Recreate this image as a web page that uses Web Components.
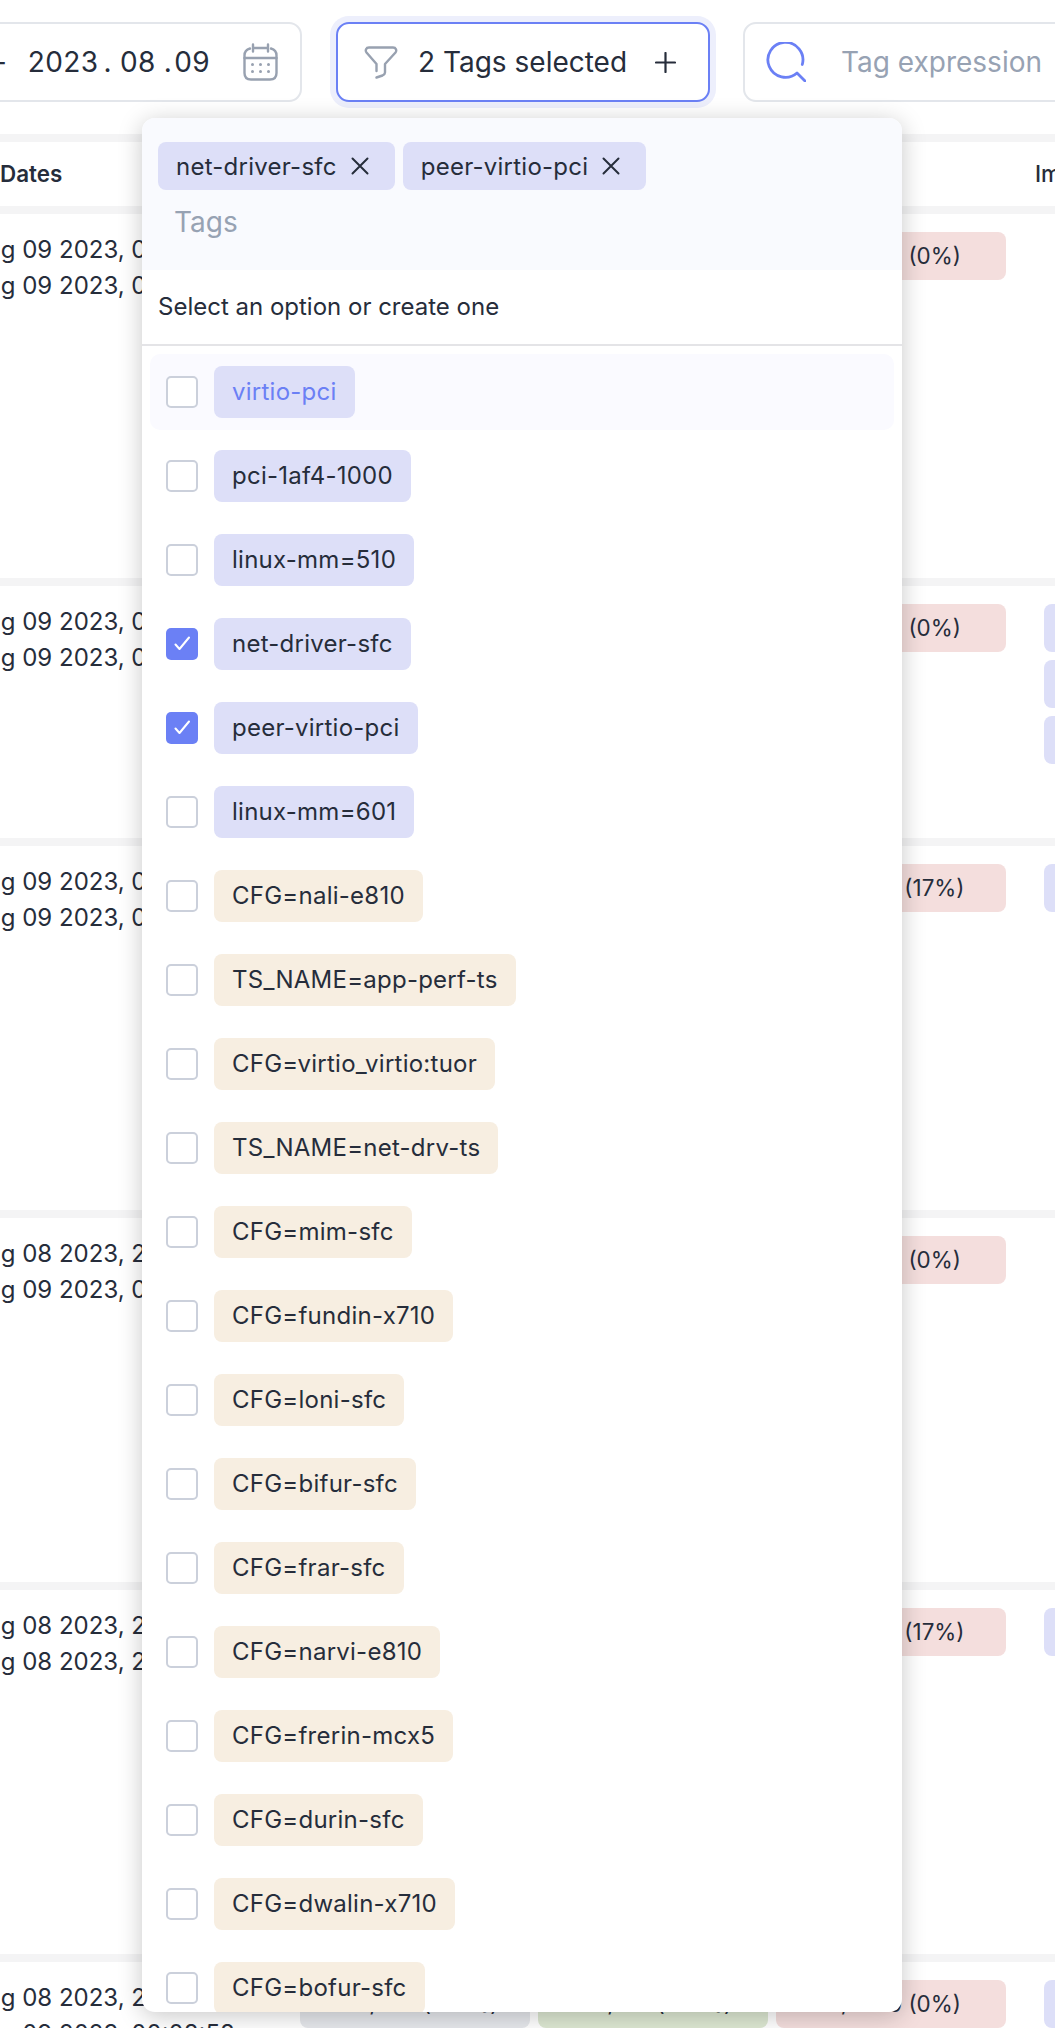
<!DOCTYPE html>
<html lang="en"><head><meta charset="utf-8"><title>Tags</title>
<style>
html,body{margin:0;padding:0;height:2028px;overflow:hidden;background:#fff}
body{font-family:Inter,"Noto Sans",sans-serif;color:#262d3b}
</style></head><body>
<app-page>
  <tool-bar slot="bar"></tool-bar>
  <data-table slot="table">
    <table-head></table-head>
    <table-row h="364" a="Aug 09 2023, 00:12:44" b="Aug 09 2023, 02:51:07">
      <ui-pill tone="gray">1180 / 1180 (100%)</ui-pill><ui-pill tone="green">0 / 1180 (0%)</ui-pill><ui-pill tone="red">0 / 1180 (0%)</ui-pill><tag-stack></tag-stack>
    </table-row>
    <table-row h="252" a="Aug 09 2023, 00:03:18" b="Aug 09 2023, 03:27:39">
      <ui-pill tone="gray">1180 / 1180 (100%)</ui-pill><ui-pill tone="green">0 / 1180 (0%)</ui-pill><ui-pill tone="red">0 / 1180 (0%)</ui-pill>
      <tag-stack><ui-pill tone="purple" left>virtio-pci</ui-pill><ui-pill tone="purple" left>net-driver-sfc</ui-pill><ui-pill tone="purple" left>linux-mm=510</ui-pill></tag-stack>
    </table-row>
    <table-row h="364" a="Aug 09 2023, 00:01:55" b="Aug 09 2023, 01:40:12">
      <ui-pill tone="gray">118 / 118 (100%)</ui-pill><ui-pill tone="green">98 / 118 (83%)</ui-pill><ui-pill tone="red">20 / 118 (17%)</ui-pill>
      <tag-stack><ui-pill tone="purple" left>pci-1af4-1000</ui-pill></tag-stack>
    </table-row>
    <table-row h="364" a="Aug 08 2023, 23:48:21" b="Aug 09 2023, 00:58:36">
      <ui-pill tone="gray">1180 / 1180 (100%)</ui-pill><ui-pill tone="green">0 / 1180 (0%)</ui-pill><ui-pill tone="red">0 / 1180 (0%)</ui-pill><tag-stack></tag-stack>
    </table-row>
    <table-row h="364" a="Aug 08 2023, 21:16:02" b="Aug 08 2023, 23:30:49">
      <ui-pill tone="gray">118 / 118 (100%)</ui-pill><ui-pill tone="green">98 / 118 (83%)</ui-pill><ui-pill tone="red">20 / 118 (17%)</ui-pill>
      <tag-stack><ui-pill tone="purple" left>linux-mm=601</ui-pill></tag-stack>
    </table-row>
    <table-row h="364" a="Aug 08 2023, 20:41:33" b="Aug 09 2023, 00:08:58">
      <ui-pill tone="gray">118 / 118 (100%)</ui-pill><ui-pill tone="green">66 / 66 (100%)</ui-pill><ui-pill tone="red">0 / 1180 (0%)</ui-pill>
      <tag-stack><ui-pill tone="purple" left>peer-virtio-pci</ui-pill></tag-stack>
    </table-row>
  </data-table>
  <tag-dropdown slot="menu">
    <tag-option tone="purple" hover>virtio-pci</tag-option>
    <tag-option tone="purple">pci-1af4-1000</tag-option>
    <tag-option tone="purple">linux-mm=510</tag-option>
    <tag-option tone="purple" checked>net-driver-sfc</tag-option>
    <tag-option tone="purple" checked>peer-virtio-pci</tag-option>
    <tag-option tone="purple">linux-mm=601</tag-option>
    <tag-option tone="beige">CFG=nali-e810</tag-option>
    <tag-option tone="beige">TS_NAME=app-perf-ts</tag-option>
    <tag-option tone="beige">CFG=virtio_virtio:tuor</tag-option>
    <tag-option tone="beige">TS_NAME=net-drv-ts</tag-option>
    <tag-option tone="beige">CFG=mim-sfc</tag-option>
    <tag-option tone="beige">CFG=fundin-x710</tag-option>
    <tag-option tone="beige">CFG=loni-sfc</tag-option>
    <tag-option tone="beige">CFG=bifur-sfc</tag-option>
    <tag-option tone="beige">CFG=frar-sfc</tag-option>
    <tag-option tone="beige">CFG=narvi-e810</tag-option>
    <tag-option tone="beige">CFG=frerin-mcx5</tag-option>
    <tag-option tone="beige">CFG=durin-sfc</tag-option>
    <tag-option tone="beige">CFG=dwalin-x710</tag-option>
    <tag-option tone="beige">CFG=bofur-sfc</tag-option>
  </tag-dropdown>
</app-page>
<script>
const TONES = {purple:'#dddff8',beige:'#f7eee1',red:'#f4dedd',green:'#dde8d2',gray:'#e6e8ec'};
const COLS = '322px 230px 230px 230px 200px';
function def(name, html, observe){
  customElements.define(name, class extends HTMLElement{
    constructor(){super();this.attachShadow({mode:'open'}).innerHTML = typeof html==='function'? html(this):html;}
    connectedCallback(){ if(observe) this.shadowRoot.innerHTML = html(this); }
  });
}
def('app-page', `<style>
:host{display:block;position:relative;width:1055px;height:2028px;overflow:hidden}
.menu{position:absolute;left:142px;top:118px;z-index:5}
</style><slot name="bar"></slot><slot name="table"></slot><div class="menu"><slot name="menu"></slot></div>`);

def('tool-bar', `<style>
:host{display:flex;align-items:stretch;height:80px;padding-top:22px;margin-left:-200px;margin-bottom:32px;font-size:28px;line-height:32px;white-space:nowrap}
.box{box-sizing:border-box;height:80px;border:2px solid #e3e6eb;border-radius:13px;display:flex;align-items:center;flex:none;background:#fff}
.date{width:502px;justify-content:flex-end;padding-right:22px}
.date .d{letter-spacing:.4px;margin-right:33px;display:flex}
.date .dash{margin-right:23px;letter-spacing:0}
.date .sep{margin:0 8px 0 5px}
.date .sep2{margin:0 2px 0 8px}
.filter{width:374px;margin-left:34px;border-color:#6b80f5;box-shadow:0 0 0 6px #edeffc;padding-left:26px}
.filter .t{margin:0 28px 0 20px}
.search{width:400px;margin-left:33px;padding-left:21px;color:#97a2b3}
.search .t{margin-left:35px}
svg{display:block;flex:none;fill:none}
</style>
<div class="box date"><span class="dash">–</span><span class="d"><span>2023</span><span class="sep">.</span><span>08</span><span class="sep2">.</span><span>09</span></span>
<svg width="35" height="38" viewBox="0 0 35 38" stroke="#98a1b0" stroke-width="2.4" stroke-linecap="round"><path d="M7 5.5C3.5 6.5 1.5 8.5 1.5 12.500V30C1.500 34 4 36.500 8 36.500H27C31 36.500 33.500 34 33.500 30V12.500C33.500 8.500 31.500 6.500 28 5.500"/><path d="M10 1.500V8.500M25 1.500V8.500M10 5H25M1.500 15H33.500"/><g fill="#98a1b0" stroke="none"><circle cx="9.500" cy="21.500" r="1.500"/><circle cx="17.500" cy="21.500" r="1.500"/><circle cx="25.500" cy="21.500" r="1.500"/><circle cx="9.500" cy="28.500" r="1.500"/><circle cx="17.500" cy="28.500" r="1.500"/><circle cx="25.500" cy="28.500" r="1.500"/></g></svg></div>
<div class="box filter"><svg width="34" height="33" viewBox="0 0 34 33" stroke="#98a1b0" stroke-width="2.400" stroke-linecap="round" stroke-linejoin="round"><path d="M12.500 25V18L2.500 6.500C1 4.500 2 1.500 5 1.500H29C32 1.500 33 4.500 31.500 6.500L21 18V26.500C21 28 20 28.800 18.500 29.500L12.500 31.500"/></svg><span class="t">2 Tags selected</span><svg width="21" height="21" viewBox="0 0 21 21" stroke="#262d3b" stroke-width="2.200" stroke-linecap="round"><path d="M10.500 1V20M1 10.500H20"/></svg></div>
<div class="box search"><svg width="40" height="40" viewBox="0 0 40 40" stroke="#6b80f5" stroke-width="2.800" stroke-linecap="round" stroke-linejoin="round"><path d="M36.300 22.500A17.500 17.500 0 1 0 31 31L39 39"/></svg><span class="t">Tag expression</span></div>`);

def('data-table', `<style>
:host{display:block;margin-left:-30px;width:1200px;font-size:24px;line-height:36px;white-space:nowrap;background:#fff}
</style><slot></slot>`);

def('table-head', `<style>
:host{display:grid;grid-template-columns:${COLS};column-gap:8px;box-sizing:border-box;height:72px;border-top:8px solid #f4f4f5;font-weight:500;font-size:22.400px;align-items:center;color:#262d3b}
.d{padding-left:30px;font-weight:600}
.i{margin-left:21px}
</style><span class="d">Dates</span><span>Total</span><span>Passed</span><span>Failed</span><span class="i">Images</span>`);

def('table-row', (el)=>`<style>
:host{display:grid;grid-template-columns:${COLS};column-gap:8px;align-items:start;box-sizing:border-box;height:${(+el.getAttribute('h')||364)+8}px;border-top:8px solid #f4f4f5;padding-top:18px;font-size:24px;line-height:36px;overflow:hidden}
.dates{display:flex;flex-direction:column}
</style><div class="dates"><span>${el.getAttribute('a')||''}</span><span>${el.getAttribute('b')||''}</span></div><slot></slot>`, true);

def('tag-stack', `<style>
:host{display:flex;flex-direction:column;gap:8px;margin-left:30px;width:170px}
</style><slot></slot>`);

def('ui-pill', (el)=>{const t=el.getAttribute('tone');return `<style>
:host{display:block;box-sizing:border-box;height:48px;line-height:48px;border-radius:8px;background:${TONES[t]||'#eee'};text-align:${el.hasAttribute('left')?'left;padding-left:20px':'center'};font-size:22.400px;white-space:nowrap;overflow:hidden;flex:none}
</style><slot></slot>`}, true);

def('check-box', (el)=>`<style>
:host{display:block;box-sizing:border-box;width:32px;height:32px;border-radius:5px;flex:none;${el.hasAttribute('checked')?'background:#6b80f5':'border:2px solid #cbd0db;background:#fff'}}
svg{display:block;margin:8px}
</style>${el.hasAttribute('checked')?'<svg width="16" height="16" viewBox="0 0 16 16" fill="none" stroke="#fff" stroke-width="2" stroke-linecap="round" stroke-linejoin="round"><path d="M1.500 8.500L5.500 13L15 1.500"/></svg>':''}`, true);

def('tag-option', (el)=>{const t=el.getAttribute('tone'),h=el.hasAttribute('hover'),c=el.hasAttribute('checked');return `<style>
:host{display:flex;align-items:center;gap:16px;box-sizing:border-box;height:76px;padding:0 16px;border-radius:10px;flex:none;${h?'background:#fafaff':''}}
.t{display:block;box-sizing:border-box;height:52px;line-height:52px;padding:0 18px;border-radius:8px;background:${TONES[t]};font-size:24px;letter-spacing:.25px;white-space:nowrap;${h?'color:#6b80f5':''}}
</style><check-box ${c?'checked':''}></check-box><span class="t"><slot></slot></span>`}, true);

def('tag-chip', `<style>
:host{display:flex;align-items:center;box-sizing:border-box;height:48px;padding:0 26px 0 18px;border-radius:8px;background:#dddff8;font-size:24px;letter-spacing:.25px;white-space:nowrap;gap:14px}
svg{display:block;flex:none}
</style><span><slot></slot></span><svg width="18" height="18" viewBox="0 0 18 18" fill="none" stroke="#262d3b" stroke-width="2" stroke-linecap="round"><path d="M1.500 1.500L16.500 16.500M16.500 1.500L1.500 16.500"/></svg>`);

def('tag-dropdown', `<style>
:host{display:block;box-sizing:border-box;width:760px;height:1894px;border-radius:13px;background:#fff;overflow:hidden;box-shadow:0 4px 24px rgba(0,0,0,.22)}
.head{box-sizing:border-box;height:152px;background:#f9fafe;padding:24px 16px 0}
.chips{display:flex;gap:8px}
.ph{display:block;margin:14px 0 0 16px;color:#97a2b3;font-size:28px;line-height:36px}
.hint{box-sizing:border-box;height:76px;display:flex;align-items:center;padding-left:16px;padding-bottom:2px;border-bottom:2px solid #e4e4e7;font-size:24px}
.list{display:flex;flex-direction:column;gap:8px;padding:8px}
</style><div class="head"><div class="chips"><tag-chip>net-driver-sfc</tag-chip><tag-chip>peer-virtio-pci</tag-chip></div><span class="ph">Tags</span></div>
<div class="hint">Select an option or create one</div><div class="list"><slot></slot></div>`);
</script>
</body></html>
